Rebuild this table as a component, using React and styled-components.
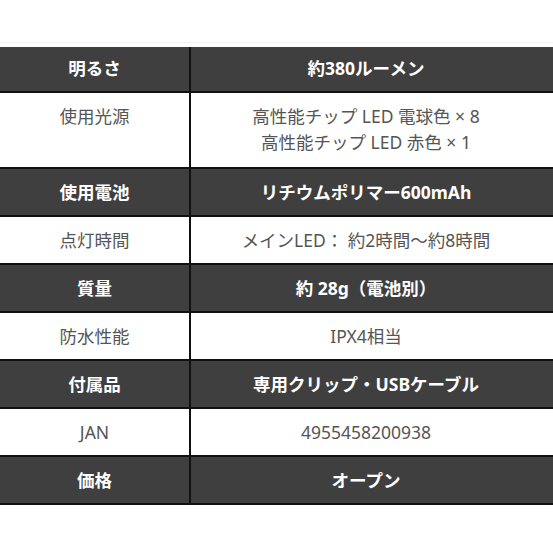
import React from "react";
import styled, { createGlobalStyle } from "styled-components";

const GlobalStyle = createGlobalStyle`
  html, body {
    margin: 0;
    padding: 0;
    background: #fff;
  }
  body {
    font-family: "Noto Sans", "Noto Sans CJK JP", sans-serif;
  }
`;

const Page = styled.div`
  padding-top: 42px;
  width: 553px;
`;

const Hairline = styled.div`
  height: 1px;
  background: #f3f3f3;
  margin-bottom: 4px;
`;

const Table = styled.table`
  width: 100%;
  border-collapse: collapse;
  table-layout: fixed;
  font-size: 17.5px;
  line-height: 26px;
`;

const Row = styled.tr`
  height: ${(p) => p.$h}px;
  background: ${(p) => (p.$dark ? "#3f3f3f" : "#fff")};
  color: ${(p) => (p.$dark ? "#fff" : "#555")};
  font-weight: ${(p) => (p.$dark ? 700 : 400)};
  border-bottom: 2px solid #111;
`;

const Label = styled.td`
  width: 190px;
  box-sizing: border-box;
  text-align: center;
  vertical-align: top;
  padding: ${(p) => p.$top}px 0 0;
  border-right: 2px solid #111;
`;

const Value = styled.td`
  text-align: center;
  vertical-align: top;
  padding: ${(p) => p.$top}px 12px 0 0;
`;

const specs = [
  { label: "明るさ", value: ["約380ルーメン"], dark: true, h: 45, top: 8 },
  {
    label: "使用光源",
    value: ["高性能チップ LED 電球色 × 8", "高性能チップ LED 赤色 × 1"],
    h: 76,
    top: 10,
  },
  { label: "使用電池", value: ["リチウムポリマー600mAh"], dark: true, h: 48, top: 10 },
  { label: "点灯時間", value: ["メインLED： 約2時間〜約8時間"], h: 48, top: 10 },
  { label: "質量", value: ["約 28g（電池別）"], dark: true, h: 48, top: 10 },
  { label: "防水性能", value: ["IPX4相当"], h: 48, top: 10 },
  { label: "付属品", value: ["専用クリップ・USBケーブル"], dark: true, h: 48, top: 10 },
  { label: "JAN", value: ["4955458200938"], h: 48, top: 10 },
  { label: "価格", value: ["オープン"], dark: true, h: 48, top: 10 },
];

export default function App() {
  return (
    <Page>
      <GlobalStyle />
      <Hairline />
      <Table>
        <tbody>
          {specs.map((s) => (
            <Row key={s.label} $dark={s.dark} $h={s.h}>
              <Label $top={s.top}>{s.label}</Label>
              <Value $top={s.top}>
                {s.value.map((line, i) => (
                  <div key={i}>{line}</div>
                ))}
              </Value>
            </Row>
          ))}
        </tbody>
      </Table>
    </Page>
  );
}
